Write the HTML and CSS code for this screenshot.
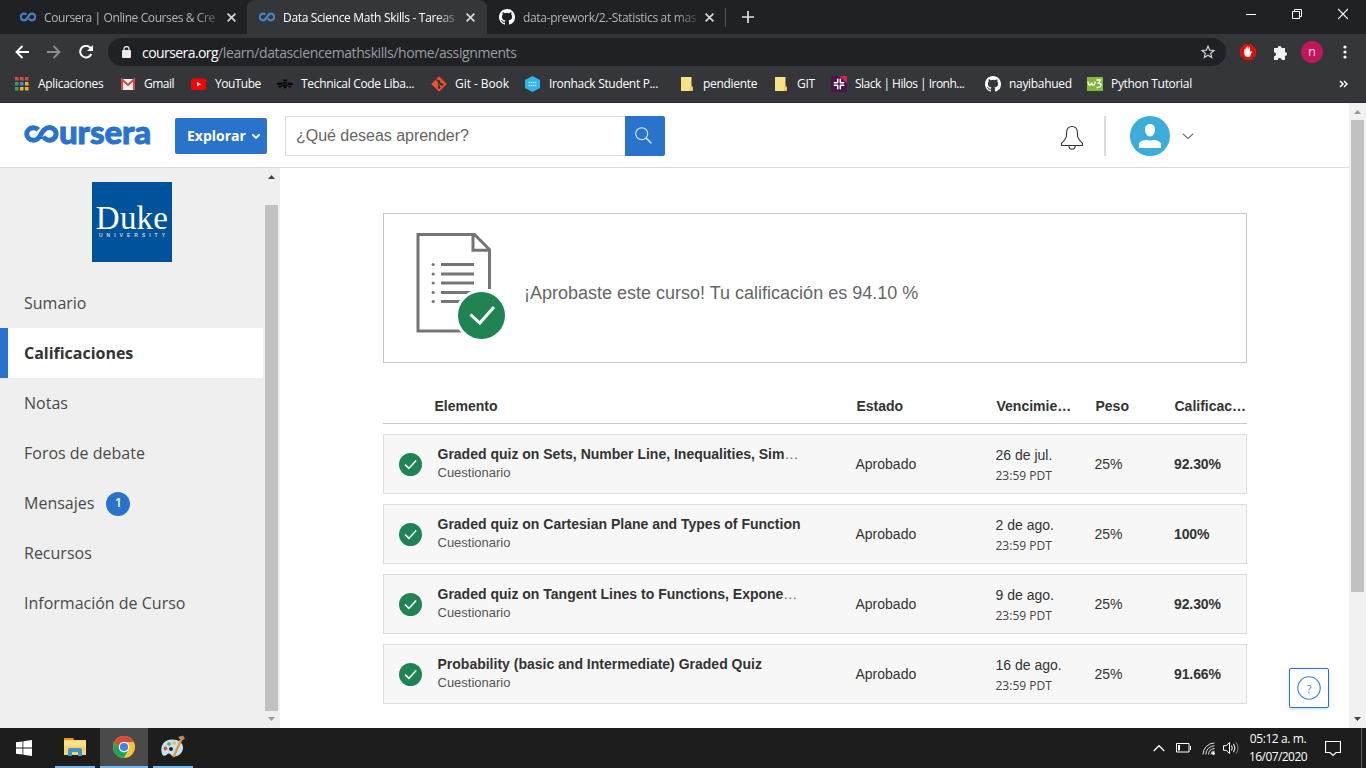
FILE: index.html
```html
<!DOCTYPE html>
<html lang="es">
<head>
<meta charset="utf-8">
<title>Data Science Math Skills - Tareas</title>
<link rel="stylesheet" href="styles.css">
</head>
<body>
<svg class="defs" width="0" height="0">
  <symbol id="inf" viewBox="0 0 16 10"><path d="M6.300 2.600A3.300 3.300 0 1 0 6.300 7.400L9.700 2.600A3.300 3.300 0 1 1 9.700 7.400L8.800 6.600" fill="none" stroke="#3f83c5" stroke-width="2.300"/></symbol>
  <symbol id="cross" viewBox="0 0 8 8"><path d="M.5.5l7 7M7.500.5l-7 7" fill="none" stroke="currentColor" stroke-width="1.500"/></symbol>
  <symbol id="github" viewBox="0 0 16 16"><path fill="#fff" d="M8 0C3.580 0 0 3.580 0 8c0 3.540 2.290 6.530 5.470 7.590.4.070.55-.17.55-.38 0-.19-.01-.82-.01-1.490-2.010.37-2.530-.49-2.690-.94-.09-.23-.48-.94-.82-1.130-.28-.15-.68-.52-.01-.53.63-.01 1.080.58 1.230.82.72 1.210 1.870.87 2.330.66.07-.52.28-.87.51-1.070-1.780-.2-3.640-.89-3.640-3.950 0-.87.31-1.590.82-2.150-.08-.2-.36-1.020.08-2.120 0 0 .67-.21 2.200.82a7.600 7.600 0 0 1 4 0c1.530-1.040 2.200-.82 2.200-.82.44 1.100.16 1.920.08 2.120.51.56.82 1.270.82 2.150 0 3.070-1.870 3.750-3.650 3.950.29.25.54.73.54 1.480 0 1.070-.01 1.930-.01 2.200 0 .21.15.46.55.38A8.010 8.010 0 0 0 16 8c0-4.420-3.580-8-8-8z"/></symbol>
  <symbol id="folder" viewBox="0 0 16 16"><path fill="#fbe08a" d="M2 1h10.500v9.500h1V15H2z"/><path fill="none" stroke="#e8c155" d="M11.500 14.500v-3.500h2v3.500z"/></symbol>
  <symbol id="ok" viewBox="0 0 24 24"><circle cx="12" cy="12" r="12" fill="#208354"/><path d="M6.300 12.200l4 3.900 7.600-8.200" fill="none" stroke="#fff" stroke-width="1.700"/></symbol>
</svg>

<div class="tabs">
  <div class="tab tab-a"><svg class="fav" width="16" height="10"><use href="#inf"/></svg><span class="tab-title">Coursera | Online Courses &amp; Cre</span><svg width="9" height="9"><use href="#cross"/></svg></div>
  <div class="tab active"><svg class="fav" width="16" height="10"><use href="#inf"/></svg><span class="tab-title">Data Science Math Skills - Tareas</span><svg width="9" height="9"><use href="#cross"/></svg></div>
  <div class="tab tab-c"><svg class="fav" width="16" height="16"><use href="#github"/></svg><span class="tab-title">data-prework/2.-Statistics at mas</span><svg width="9" height="9"><use href="#cross"/></svg></div>
  <svg class="plus" width="12" height="12" viewBox="0 0 12 12"><path d="M6 0v12M0 6h12" stroke="#dee1e6" stroke-width="1.700"/></svg>
  <div class="winctl">
    <svg width="10" height="12" viewBox="0 0 10 12"><path d="M0 6.500h10" stroke="#fff"/></svg>
    <svg width="10" height="12" viewBox="0 0 10 12"><path d="M.5 3.500h7v7h-7zM2.500 3.500v-2h7v7h-2" fill="none" stroke="#fff"/></svg>
    <svg width="10" height="12" viewBox="0 0 10 12"><path d="M0 1l10 10M10 1L0 11" stroke="#fff" stroke-width="1.200"/></svg>
  </div>
</div>

<div class="toolbar">
  <svg class="nav" width="14" height="14" viewBox="0 0 14 14"><path d="M14 7H1.500M7.500 1L1.500 7l6 6" fill="none" stroke="#fff" stroke-width="1.900"/></svg>
  <svg class="nav" width="14" height="14" viewBox="0 0 14 14"><path d="M0 7h12.500M6.500 1l6 6-6 6" fill="none" stroke="#8b8c8e" stroke-width="1.900"/></svg>
  <svg class="nav" width="14" height="14" viewBox="0 0 14 14"><path d="M12.300 9A5.800 5.800 0 1 1 11.500 3" fill="none" stroke="#fff" stroke-width="2"/><path d="M14 0v6H8z" fill="#fff"/></svg>
  <div class="omnibox">
    <svg width="9" height="12" viewBox="0 0 9 12"><rect y="4" width="9" height="8" rx="1" fill="#e8eaed"/><path d="M2 5V3a2.500 2.500 0 0 1 5 0v2" fill="none" stroke="#e8eaed" stroke-width="1.300"/></svg>
    <span class="url"><b>coursera.org</b>/learn/datasciencemathskills/home/assignments</span>
    <svg width="14" height="14" viewBox="0 0 14 14"><path d="M7 1.200l1.700 4 4.300.3-3.300 2.800 1 4.300L7 10.300l-3.700 2.300 1-4.300L1 5.500l4.300-.3z" fill="none" stroke="#d0d2d5" stroke-width="1.200"/></svg>
  </div>
  <svg class="ext-ad" width="16" height="16" viewBox="0 0 16 16"><path d="M4.700 0h6.600L16 4.700v6.600L11.300 16H4.700L0 11.300V4.700z" fill="#d9120f"/><path d="M4.200 8.500l.2-3.500h.9l.3 2 .2-3.800h1l.3 3 .2-3.900h1l.3 3.900.5-3h.9l.1 4.800.9-.7 1.100.2-2.300 5.200H6.200L4.500 11z" fill="#fff"/></svg>
  <svg class="ext-puzzle" width="15" height="15" viewBox="0 0 15 15"><path fill="#f1f3f4" d="M1 3h3.600a2 2 0 1 1 4 0H12v4a2 2 0 1 1 0 4v4H8.700a2 2 0 0 0-4 0H1v-3.800a2 2 0 0 0 0-4z"/></svg>
  <span class="me">n</span>
  <svg class="kebab" width="4" height="14" viewBox="0 0 4 14"><g fill="#fff"><circle cx="2" cy="2" r="1.600"/><circle cx="2" cy="7" r="1.600"/><circle cx="2" cy="12" r="1.600"/></g></svg>
</div>

<div class="bookmarks">
  <a class="w106 plain"><svg width="16" height="16" viewBox="0 0 16 16"><path d="M1 1h3.500v3.500H1zM6 1h3.500v3.500H6zM11 1h3.500v3.500H11z" fill="#e0483e"/><path d="M1 6h3.500v3.500H1z" fill="#35a35a"/><path d="M6 6h3.500v3.500H6z" fill="#4488e8"/><path d="M11 6h3.500v3.500H11zM11 11h3.500v3.500H11zM6 11h3.500v3.500H6z" fill="#eeb12f"/><path d="M1 11h3.500v3.500H1z" fill="#35a35a"/></svg>Aplicaciones</a>
  <a class="w71 tight"><svg width="16" height="16" viewBox="0 0 16 16"><path fill="#f1eeee" d="M1 3h14v11H1z"/><path d="M2 14V3.500l6 5.500 6-5.500V14" fill="none" stroke="#d5483d" stroke-width="2"/></svg>Gmail</a>
  <a class="w86 tight"><svg width="16" height="16" viewBox="0 0 16 16"><rect x="0" y="2.500" width="15" height="11.500" rx="2.500" fill="#f00"/><path d="M6 6v4.500l4-2.200z" fill="#fff"/></svg>YouTube</a>
  <a class="w154"><svg width="16" height="16" viewBox="0 0 16 16"><g fill="#050505"><path d="M6 3.200l1.300.6h1.400l1.300-.6v1.600l-.8.8H6.800L6 4.800zM5.500 6.300h5v1.500h-5zM5.200 8.400h5.600v1.500H5.200zM5.700 10.500h4.600L8 12.800z"/><path d="M5 6.300L.8 7C-.3 7.400-.2 9 .8 9H4.700zM11 6.300l4.200.7c1.100.4 1 2 0 2h-3.900zM4.700 9.500l-3 .6c-.6.700 0 1.500 1 1.400l2.500-.9zM11.300 9.500l3 .6c.6.700 0 1.500-1 1.400l-2.500-.9z"/></g></svg>Technical Code Liba...</a>
  <a class="w93 loose"><svg width="16" height="16" viewBox="0 0 16 16"><path fill="#f0502f" d="M8 .2L15.800 8 8 15.800.2 8z"/><path d="M5.500 3.500L8 6v6M8 6l3 3" stroke="#2e2f30" stroke-width="1.200" fill="none"/><g fill="#2e2f30"><circle cx="8" cy="5.500" r="1.300"/><circle cx="11" cy="8.500" r="1.300"/><circle cx="8" cy="11.500" r="1.300"/></g></svg>Git - Book</a>
  <a class="w155"><svg width="16" height="16" viewBox="0 0 16 16"><path fill="#2fb5ee" d="M8.500 0L16 4v8l-7.500 4L1 12V4z"/><path d="M4.500 6.500h8M4.500 9.500h8" stroke="#b9e8fb" stroke-width="1.600" stroke-dasharray="1.500 .6"/></svg><span class="nudge">Ironhack Student P...</span></a>
  <a class="w94"><svg width="16" height="16"><use href="#folder"/></svg>pendiente</a>
  <a class="w58"><svg width="16" height="16"><use href="#folder"/></svg>GIT</a>
  <a class="w154 tight"><svg width="16" height="16" viewBox="0 0 16 16"><path fill="#4a154b" d="M0 0h16v16H0z"/><path fill="#d2284c" d="M8 0h8v7z"/><path d="M6.700 3.300v3M3.300 6.700h3M9.300 3.300v3.400M9.700 6.700h3M3.300 9.300h3.400M6.700 9.700v3M9.300 9.300h3.400M9.300 9.700v3" stroke="#fff" stroke-width="1.500" stroke-linecap="round"/></svg>Slack | Hilos | Ironh...</a>
  <a class="w102"><svg width="16" height="16"><use href="#github"/></svg>nayibahued</a>
  <a class="grow"><svg width="16" height="16" viewBox="0 0 16 16"><path fill="#82b93a" d="M0 1h16v14H0z"/><path d="M1 5.500q0 3.500 1.700 3.500T4.500 6.500q0 2.500 1.800 2.500T8 5.500M9.500 4h4L11.500 7q2.500 0 2.500 2.300T9.500 11.500" fill="none" stroke="#fff" stroke-width="1.300"/></svg>Python Tutorial</a>
  <svg class="more" width="9" height="8" viewBox="0 0 9 8"><path d="M1 1l3 3-3 3M5 1l3 3-3 3" fill="none" stroke="#fff" stroke-width="1.500"/></svg>
</div>

<div class="page">
  <div class="site">
    <header class="header">
      <div class="brand"><svg width="37" height="20" viewBox="0 0 37 20"><path d="M15.300 5.700A6.700 6.300 0 1 0 15.300 14.300C17.500 12 18.800 7.800 21.600 5.500A6.700 6.300 0 1 1 20.300 12.500" fill="none" stroke="#2a73cc" stroke-width="5"/></svg><span>ursera</span></div>
      <button class="explore">Explorar<svg width="8" height="6" viewBox="0 0 8 6"><path d="M1 1l3 3 3-3" fill="none" stroke="#fff" stroke-width="1.900" stroke-linecap="round"/></svg></button>
      <div class="search">¿Qué deseas aprender?</div>
      <div class="search-btn"><svg width="17" height="17" viewBox="0 0 17 17"><circle cx="6.700" cy="6.700" r="6" fill="none" stroke="#e3edf9" stroke-width="1.100"/><path d="M11 11l5.300 5.300" stroke="#e3edf9" stroke-width="1.500"/></svg></div>
      <svg class="bell" width="24" height="26" viewBox="0 0 24 26"><path d="M1.500 20.500v-2.200C4 16 6 14 6.300 11.500L6.600 7C6.900 3 8.700 1.500 12 1.500s5.100 1.500 5.400 5.500l.3 4.500c.3 2.500 2.300 4.500 4.800 6.800v2.200zM8.800 20.500c.2 5 6.300 5 6.500 0" fill="none" stroke="#333" stroke-width="1.100"/></svg>
      <span class="divider"></span>
      <svg class="avatar" width="40" height="40" viewBox="0 0 40 40"><circle cx="20" cy="20" r="20" fill="#3badd8"/><path fill="#fff" d="M20 8c3.300 0 5 2.400 5 5.500 0 3.600-2 7-5 7s-5-3.400-5-7C15 10.400 16.700 8 20 8zM9 32v-3.500c0-3.500 5-4 7.500-4.700 2 1 5 1 7 0 2.500.7 7.500 1.200 7.500 4.700V32z"/></svg>
      <svg width="12" height="7" viewBox="0 0 12 7"><path d="M.8.8L6 5.500 11.200.8" fill="none" stroke="#777" stroke-width="1.200"/></svg>
    </header>
    <div class="body">
      <aside class="sidebar">
        <div class="duke"><span class="duke-name">Duke</span><span class="duke-sub">UNIVERSITY</span></div>
        <nav class="menu">
          <a>Sumario</a>
          <a class="current">Calificaciones</a>
          <a>Notas</a>
          <a>Foros de debate</a>
          <a>Mensajes<i class="count">1</i></a>
          <a>Recursos</a>
          <a>Información de Curso</a>
        </nav>
      </aside>
      <div class="scroll side-scroll"><svg width="7" height="4" viewBox="0 0 7 4"><path d="M0 4L3.500 0 7 4z" fill="#444"/></svg><span></span><svg width="7" height="4" viewBox="0 0 7 4"><path d="M0 0l3.500 4L7 0z" fill="#999"/></svg></div>
      <main class="main">
        <section class="passed">
          <svg width="92" height="108" viewBox="0 0 92 108"><path d="M73.500 56V16.500L58.500 1.500H2v96.500h44M57 2v15.200h16" fill="none" stroke="#757575" stroke-width="3"/><path d="M25 31.500h33M25 41h33M25 50h33M25 59.500h33M25 68.500h33" stroke="#757575" stroke-width="3"/><g fill="#757575"><circle cx="17.200" cy="31.500" r="1.600"/><circle cx="17.200" cy="41" r="1.600"/><circle cx="17.200" cy="50" r="1.600"/><circle cx="17.200" cy="59.500" r="1.600"/><circle cx="17.200" cy="68.500" r="1.600"/></g><circle cx="65.500" cy="82.500" r="26.500" fill="#fff"/><circle cx="65.500" cy="82.500" r="23.500" fill="#208354"/><path d="M54.500 81.500l9.300 8.500L78 74" fill="none" stroke="#fff" stroke-width="3"/></svg>
          <p>¡Aprobaste este curso! Tu calificación es 94.10 %</p>
        </section>
        <div class="row head"><span></span><span>Elemento</span><span>Estado</span><span>Vencimie…</span><span>Peso</span><span>Calificac…</span></div>
        <div class="row item"><svg width="23" height="23"><use href="#ok"/></svg><div><h4>Graded quiz on Sets, Number Line, Inequalities, Sim<em>…</em></h4><p>Cuestionario</p></div><span>Aprobado</span><div class="due">26 de jul.<small>23:59 PDT</small></div><span>25%</span><b>92.30%</b></div>
        <div class="row item"><svg width="23" height="23"><use href="#ok"/></svg><div><h4>Graded quiz on Cartesian Plane and Types of Function</h4><p>Cuestionario</p></div><span>Aprobado</span><div class="due">2 de ago.<small>23:59 PDT</small></div><span>25%</span><b>100%</b></div>
        <div class="row item"><svg width="23" height="23"><use href="#ok"/></svg><div><h4>Graded quiz on Tangent Lines to Functions, Expone<em>…</em></h4><p>Cuestionario</p></div><span>Aprobado</span><div class="due">9 de ago.<small>23:59 PDT</small></div><span>25%</span><b>92.30%</b></div>
        <div class="row item"><svg width="23" height="23"><use href="#ok"/></svg><div><h4>Probability (basic and Intermediate) Graded Quiz</h4><p>Cuestionario</p></div><span>Aprobado</span><div class="due">16 de ago.<small>23:59 PDT</small></div><span>25%</span><b>91.66%</b></div>
      </main>
    </div>
    <div class="help"><svg width="24" height="24" viewBox="0 0 24 24"><circle cx="12" cy="12" r="11.200" fill="none" stroke="#3f7fcf" stroke-width="1.100"/></svg><span>?</span></div>
  </div>
  <div class="scroll page-scroll"><svg width="7" height="4" viewBox="0 0 7 4"><path d="M0 4L3.500 0 7 4z" fill="#999"/></svg><span></span><svg width="7" height="4" viewBox="0 0 7 4"><path d="M0 0l3.500 4L7 0z" fill="#444"/></svg></div>
</div>

<div class="taskbar">
  <div class="task start"><svg width="16" height="16" viewBox="0 0 16 16"><path fill="#fff" d="M0 2.300l6.500-.9v6.200H0zM7.300 1.200L16 0v7.600H7.300zM0 8.400h6.500v6.200L0 13.700zM7.300 8.400H16V16l-8.700-1.200z"/></svg></div>
  <div class="task explorer"><svg width="22" height="20" viewBox="0 0 22 20"><path fill="#dc9a1b" d="M0 1h9l1.500 2.500H0z"/><path fill="#fad368" d="M0 3h22v15H0z"/><path fill="#fbdf8c" d="M0 4h22v5H0z"/><path fill="#3f93cc" d="M4 19v-6q0-2 2-2h10q2 0 2 2v6h-4v-4H8v4z"/></svg></div>
  <div class="task chrome"><svg width="22" height="22" viewBox="0 0 22 22"><circle cx="11" cy="11" r="11" fill="#fbc634"/><path fill="#d9493a" d="M1.500 5.500A11 11 0 0 1 20.500 5.500L20.500 6H11L6.700 13.500z"/><path fill="#26a05a" d="M1.500 5.500A11 11 0 0 0 11 22l4.500-8.500-4.500 3-4.500-3z"/><circle cx="11" cy="11" r="5.200" fill="#fff"/><circle cx="11" cy="11" r="4.100" fill="#4182ef"/></svg></div>
  <div class="task paint"><svg width="24" height="24" viewBox="0 0 24 24"><path fill="#c5e2f1" d="M11 4.500c7 0 11.500 3.500 11 9-.5 4.500-4.500 8-9 8-3 0-3-3-5-3S4.500 22 2 20.500C-1.500 16 0 4.500 11 4.500z"/><circle cx="10" cy="14" r="2" fill="#20252c"/><circle cx="4.500" cy="13.500" r="1.900" fill="#dc5148"/><circle cx="8" cy="9" r="1.800" fill="#4cae62"/><circle cx="13" cy="8" r="1.800" fill="#eab83d"/><path d="M20 5l-7.500 17" stroke="#e39a3e" stroke-width="2.400"/><path d="M17 2l5-1.500 2 3-3.500 2.500z" fill="#c68a5b"/></svg></div>
  <div class="tray">
    <svg class="t-up" width="12" height="8" viewBox="0 0 12 8"><path d="M.7 7L6 1.700 11.300 7" fill="none" stroke="#fff" stroke-width="1.300"/></svg>
    <svg class="t-bat" width="15" height="10" viewBox="0 0 15 10"><path d="M.5.5h12.500v8.500H.5zM14.500 3v4" fill="none" stroke="#fff"/><path d="M2 2h2v5.500H2z" fill="#fff"/></svg>
    <svg class="t-wifi" width="13" height="13" viewBox="0 0 13 13"><g fill="none" stroke="#ddd"><path d="M1 12.500A11.500 11.500 0 0 1 12.500 1"/><path d="M3.800 12.500a8.700 8.700 0 0 1 8.700-8.700M6.500 12.500a6 6 0 0 1 6-6M9 12.500a3.500 3.500 0 0 1 3.500-3.500"/></g><circle cx="11.500" cy="11.500" r="1.400" fill="#fff"/></svg>
    <svg class="t-vol" width="16" height="14" viewBox="0 0 16 14"><path d="M.5 4.700h2.700L6.500 1.500v11L3.200 9.300H.5zM8.500 4.500q1.500 2.500 0 5M10.500 2.800q3 4.200 0 8.400" fill="none" stroke="#fff"/><path d="M12.800 1q4.500 6 0 12" fill="none" stroke="#777"/></svg>
    <div class="clock"><span>05:12 a. m.</span><span>16/07/2020</span></div>
    <svg class="t-note" width="16" height="17" viewBox="0 0 16 17"><path d="M.5 1.500h15v11H11L8 15.500l-3-3H.5z" fill="none" stroke="#fff" stroke-width="1.200"/></svg>
    <span class="peek"></span>
  </div>
</div>
</body>
</html>
```

FILE: styles.css
```css
*{box-sizing:border-box}
body{margin:0;width:1366px;height:768px;overflow:hidden;display:flex;flex-direction:column;background:#fff;font-family:"Liberation Sans",Arial,sans-serif;color:#333}
svg{display:block;flex:none}
.defs{position:absolute}
p,h4{margin:0}

.tabs{height:34px;flex:none;background:#202124;display:flex;align-items:stretch;font:12px "Open Sans",sans-serif}
.tab{display:flex;align-items:center;gap:8px;color:#b3b6ba;letter-spacing:-.32px}
.tab-a{width:247px;padding-left:20px;letter-spacing:-.4px}
.tab-c{width:239px;padding-left:12px}
.active{width:240px;padding-left:12px;background:#35363a;border-radius:8px 8px 0 0;color:#fff}
.tab-title{width:176px;white-space:nowrap;margin-right:-1px;-webkit-mask-image:linear-gradient(90deg,#000 152px,transparent 180px);mask-image:linear-gradient(90deg,#000 152px,transparent 180px)}
.tab svg:last-child{color:#d5d7da}
.plus{margin:11px 0 0 16px}
.tab-c::after{content:"";width:1px;height:19px;background:#53565a;margin-left:3px}
.winctl{display:flex;gap:36px;margin:8px 18px 0 auto;height:12px}

.toolbar{height:36px;flex:none;background:#35363a;display:flex;align-items:center}
.nav{margin-left:15px}
.nav+.nav{margin-left:18px}
.omnibox{width:1118px;height:28px;margin-left:15px;border-radius:14px;background:#202124;display:flex;align-items:center;padding:0 11px 0 14px}
.url{flex:1;margin-left:11px;font:14px "Open Sans",sans-serif;letter-spacing:-.4px;color:#9a9da1;white-space:nowrap}
.url b{font-weight:400;color:#fff;letter-spacing:-.57px}
.ext-ad{margin-left:14px}
.ext-puzzle{margin-left:17px}
.me{width:22px;height:22px;margin-left:13px;border-radius:50%;background:#c2185b;color:#f3d3df;font:13px/20px "Open Sans",sans-serif;text-align:center}
.kebab{margin-left:20px}

.bookmarks{height:33px;flex:none;background:#35363a;border-bottom:1px solid #28292b;display:flex;align-items:center;padding:0 18px 5px 14px;font:12px "Open Sans",sans-serif;color:#fff;letter-spacing:-.32px;white-space:nowrap}
.bookmarks a{display:flex;align-items:center;gap:8px;flex:none}
.bookmarks .tight{letter-spacing:-.51px}
.bookmarks .loose{letter-spacing:-.06px}
.nudge{margin-left:1px}
.w58{width:58px}.w71{width:71px}.w86{width:86px}.w93{width:93px}.w94{width:94px}.w102{width:102px}.w106{width:106px}.w154{width:154px}.w155{width:155px}
.bookmarks .grow{flex:1}

.page{height:625px;flex:none;display:flex}
.site{width:1349px;position:relative;display:flex;flex-direction:column}
.header{height:65px;flex:none;border-bottom:1px solid #dcdcdc;display:flex;align-items:center;padding:2px 155px 0 23px}
.brand{display:flex;align-items:center;width:152px;height:36px;color:#2a73cc}
.brand span{font:900 33px/36px Lato,sans-serif;letter-spacing:-.1px;-webkit-text-stroke:1px #2a73cc;margin:-10px 0 0 -1px}
.brand svg{margin-top:-4px}
.explore{width:92px;height:36px;border:0;border-radius:2px;background:#2a73cc;color:#fff;font:bold 14px "Open Sans",sans-serif;display:flex;align-items:center;gap:6px;padding:0 0 2px 12px}
.explore svg{margin-top:3px}
.search{width:340px;height:40px;margin-left:18px;border:1px solid #dcdcdc;border-right:0;border-radius:2px 0 0 2px;padding-left:10px;font-size:16px;line-height:37px;letter-spacing:-.03px;color:#666}
.search-btn{width:40px;height:40px;background:#2a73cc;border-radius:0 2px 2px 0;padding:11px 0 0 10px}
.bell{margin:3px 20px 0 auto}
.divider{width:2px;height:40px;background:#dcdcdc;margin-right:24px}
.avatar{margin-right:12px}

.body{height:560px;display:flex}
.sidebar{width:263px;background:#efefef;padding-top:14px}
.duke{width:80px;height:80px;margin:0 0 16px 92px;background:#00539b;color:#fff;display:flex;flex-direction:column;align-items:center;padding-top:21px}
.duke-name{font:33px/30px "Liberation Serif",serif;letter-spacing:.2px}
.duke-sub{font:bold 5px/5px "Liberation Sans",sans-serif;letter-spacing:4px;margin:0 -4px 0 0;color:#c5d8ea}
.menu a{display:flex;align-items:center;height:50px;padding-left:24px;font:16px "Open Sans",sans-serif;color:#4a4a4a}
.menu .current{border-left:8px solid #2a73cc;padding-left:16px;background:#fff;font-weight:700;letter-spacing:-.02px;color:#333}
.count{width:24px;height:24px;margin:1px 0 0 12px;border-radius:50%;background:#2a73cc;color:#fff;font:600 12px/22px "Open Sans",sans-serif;text-align:center}
.scroll{width:17px;background:#f1f1f1;display:flex;flex-direction:column;align-items:center}
.scroll span{width:13px;background:#c1c1c1}
.side-scroll{background:#efefef;padding-top:7px}
.side-scroll span{height:506px;margin:26px 0 6px}
.page-scroll{padding-top:7px}
.page-scroll span{height:472px;margin:6px 0 125px}

.main{padding:45px 0 0 103px;width:967px}
.passed{height:150px;border:1px solid #c7c7c7;display:flex;padding:19px 0 0 32px}
.passed p{font-size:18px;color:#666;line-height:22px;margin:49px 0 0 16px;white-space:nowrap}
.row{display:grid;align-items:center;width:864px;font-size:14px;white-space:nowrap}
.head{grid-template-columns:51.500px 422px 140px 99px 79px 1fr;height:36px;margin-top:25px;border-bottom:1px solid #c7c7c7;font-weight:700}
.item{height:60px;margin-top:10px;background:#f7f7f7;border:1px solid #dcdcdc;grid-template-columns:53.500px 418px 140px 99px 79.500px 1fr;color:#333}
.item>svg{margin-left:15px}
.item h4{font-size:14px;line-height:20px;margin-top:-2px}
.item em{font-style:normal;font-weight:400;color:#666}
.item p{font-size:13px;line-height:18px;color:#555}
.due{line-height:20px;margin-top:2px}
.due small{display:block;font:12px/21px "Open Sans",sans-serif;color:#444}
.item b{letter-spacing:-.1px}
.help{position:absolute;left:1289px;top:565px;width:40px;height:40px;border:1px solid #2a73cc;border-radius:2px;background:#fff;box-shadow:0 1px 3px rgba(42,115,204,.3);display:grid;place-items:center;color:#3f7fcf;font:11px "Open Sans",sans-serif}
.help>*{grid-area:1/1}

.taskbar{height:40px;flex:none;background:#1d1d1d;display:flex}
.task{display:flex;align-items:center;justify-content:center;height:40px}
.start{width:48px}
.explorer,.paint{width:40px;border-bottom:2px solid #76b9ed}
.explorer{margin-left:7px}
.chrome{width:48px;margin:0 5px;background:#4b4b4b;border-bottom:2px solid #76b9ed}
.tray{margin-left:auto;display:flex;align-items:center}
.t-bat{margin-left:11px}
.t-wifi{margin-left:11px;margin-top:1px}
.t-vol{margin-left:8px;margin-top:0}
.clock{width:60px;margin-left:9px;display:flex;flex-direction:column;align-items:center;font:12px/18px "Open Sans",sans-serif;color:#fff;letter-spacing:-.4px;white-space:nowrap}
.clock span+span{letter-spacing:-.57px}
.t-note{margin-left:17px}
.peek{width:1px;height:40px;background:#5a5a5a;margin:0 4px 0 20px}
```
